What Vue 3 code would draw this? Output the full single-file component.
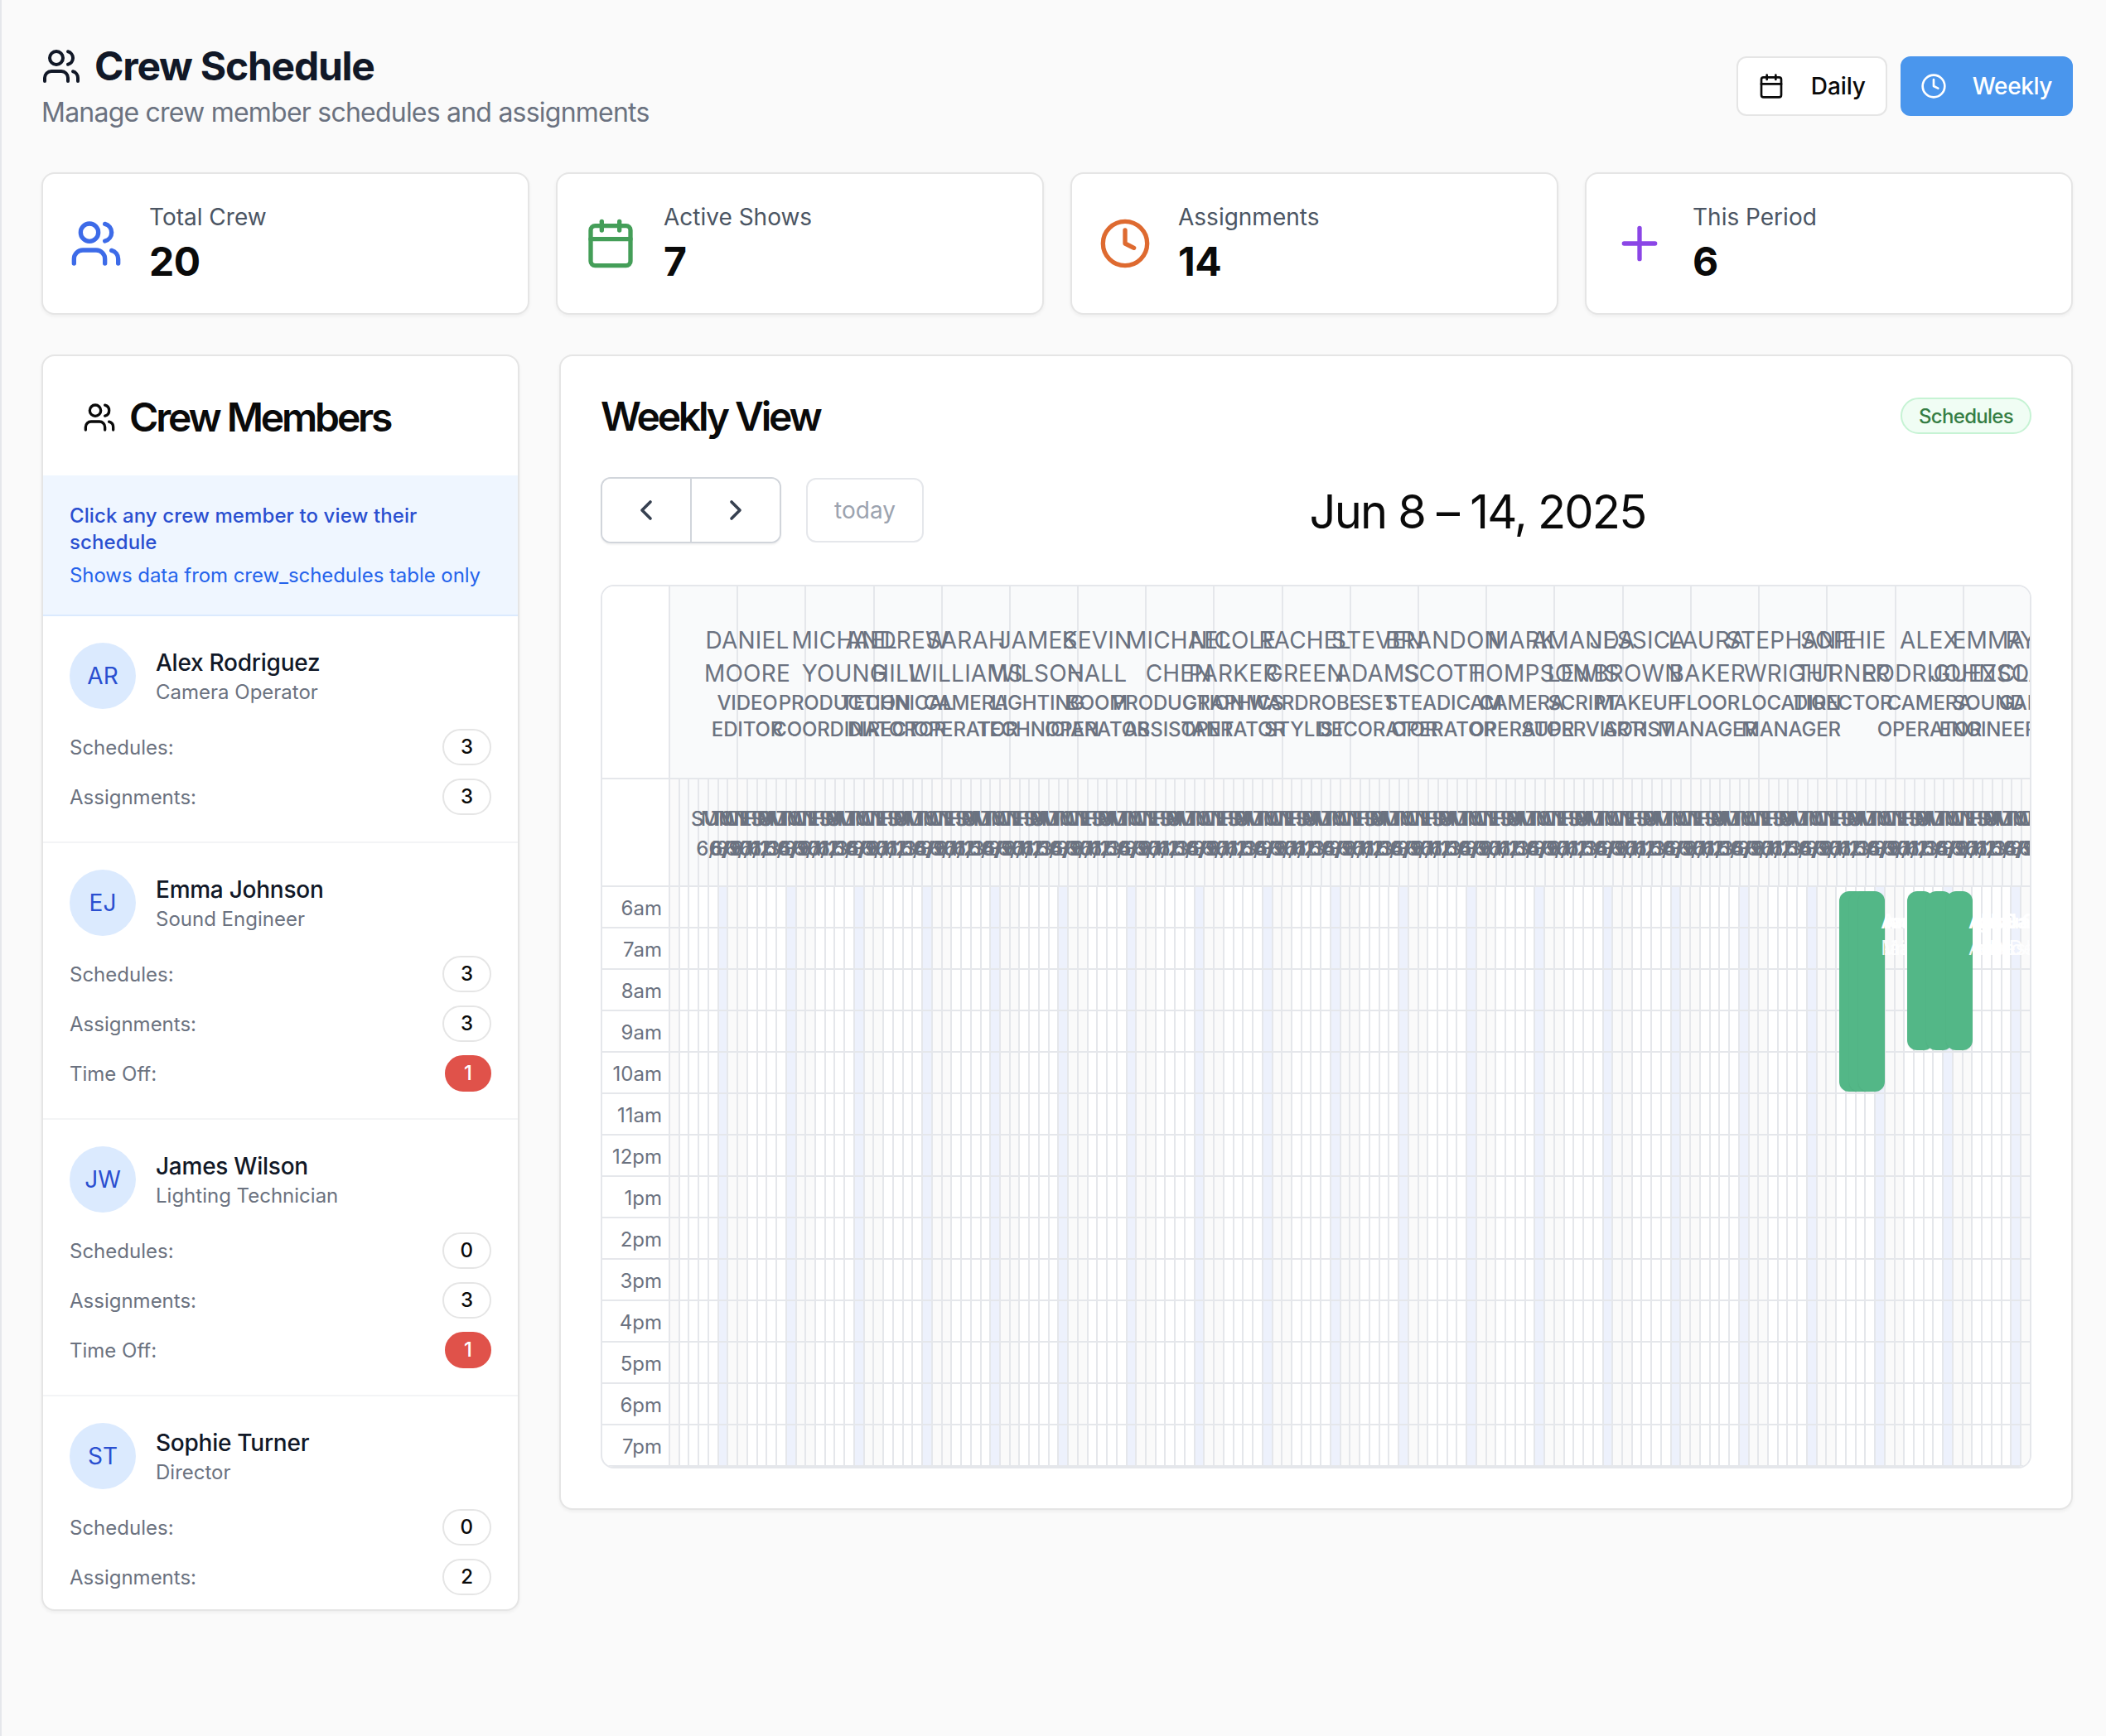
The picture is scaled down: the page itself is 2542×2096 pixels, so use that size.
<script setup>
const stats = [
  { label: 'Total Crew', value: '20', icon: 'users', color: 'blue' },
  { label: 'Active Shows', value: '7', icon: 'calendar', color: 'green' },
  { label: 'Assignments', value: '14', icon: 'clock', color: 'orange' },
  { label: 'This Period', value: '6', icon: 'plus', color: 'purple' },
]
const members = [
  { initials: 'AR', name: 'Alex Rodriguez', role: 'Camera Operator', schedules: 3, assignments: 3, off: 0 },
  { initials: 'EJ', name: 'Emma Johnson', role: 'Sound Engineer', schedules: 3, assignments: 3, off: 1 },
  { initials: 'JW', name: 'James Wilson', role: 'Lighting Technician', schedules: 0, assignments: 3, off: 1 },
  { initials: 'ST', name: 'Sophie Turner', role: 'Director', schedules: 0, assignments: 2, off: 0 },
]
const resources = [
  ['Daniel Moore', 'Video Editor'],
  ['Michael Young', 'Production Coordinator'],
  ['Andrew Hill', 'Technical Director'],
  ['Sarah Williams', 'Camera Operator'],
  ['James Wilson', 'Lighting Technician'],
  ['Kevin Hall', 'Boom Operator'],
  ['Michael Chen', 'Production Assistant'],
  ['Nicole Parker', 'Graphics Operator'],
  ['Rachel Green', 'Wardrobe Stylist'],
  ['Steven Adams', 'Set Decorator'],
  ['Brandon Scott', 'Steadicam Operator'],
  ['Mark Thompson', 'Camera Operator'],
  ['Amanda Lewis', 'Script Supervisor'],
  ['Jessica Brown', 'Makeup Artist'],
  ['Laura Baker', 'Floor Manager'],
  ['Stephanie Wright', 'Location Manager'],
  ['Sophie Turner', 'Director'],
  ['Alex Rodriguez', 'Camera Operator'],
  ['Emma Johnson', 'Sound Engineer'],
  ['Ryan Clark', 'Gaffer'],
]
const week = ['Sun 6/8', 'Mon 6/9', 'Tue 6/10', 'Wed 6/11', 'Thu 6/12', 'Fri 6/13', 'Sat 6/14']
const kinds = ['weekend', 'plain', 'plain', 'plain', 'plain', 'today', 'weekend']
const days = resources.flatMap((_, r) =>
  week.map((label, d) => ({ id: r * 7 + d, label, kind: kinds[d] }))
)
const hours = ['6am', '7am', '8am', '9am', '10am', '11am', '12pm', '1pm', '2pm', '3pm', '4pm', '5pm', '6pm', '7pm']
const COL = 82.15
const DAY = COL / 7
const eventsList = [
  { col: 17, day: 1, h: 242, a: 'Awards Night', b: 'Main Stage' },
  { col: 17, day: 2, h: 242, a: 'Awards Night', b: 'Main Stage' },
  { col: 17, day: 3, h: 242, a: 'Awards Night', b: 'Main Stage' },
  { col: 18, day: 1, h: 192, a: 'Annual Gala Show', b: 'Audio Desk Cover' },
  { col: 18, day: 3, h: 192, a: 'Annual Gala Show', b: 'Audio Desk Cover' },
  { col: 18, day: 5, h: 192, a: 'Annual Gala Show', b: 'Audio Desk Cover' },
].map((e, i) => ({
  ...e,
  id: i,
  style: { left: `${e.col * COL + e.day * DAY + 4.5}px`, height: `${e.h}px` },
}))
</script>

<template>
  <div class="page">
    <header class="top">
      <div>
        <h1 class="title">
          <svg class="i48" viewBox="0 0 24 24"><path d="M16 21v-2a4 4 0 0 0-4-4H6a4 4 0 0 0-4 4v2" /><circle cx="9" cy="7" r="4" /><path d="M22 21v-2a4 4 0 0 0-3-3.87" /><path d="M16 3.13a4 4 0 0 1 0 7.75" /></svg>
          Crew Schedule
        </h1>
        <p class="subtitle">Manage crew member schedules and assignments</p>
      </div>
      <div class="views">
        <button class="view">
          <svg class="i32" viewBox="0 0 24 24"><path d="M8 2v4" /><path d="M16 2v4" /><rect x="3" y="4" width="18" height="18" rx="2" /><path d="M3 10h18" /></svg>
          Daily
        </button>
        <button class="view active">
          <svg class="i32" viewBox="0 0 24 24"><circle cx="12" cy="12" r="10" /><path d="M12 6v6l4 2" /></svg>
          Weekly
        </button>
      </div>
    </header>

    <section class="stats">
      <div v-for="s in stats" :key="s.label" class="card stat">
        <svg class="i64" :class="s.color" viewBox="0 0 24 24">
          <template v-if="s.icon === 'users'"><path d="M16 21v-2a4 4 0 0 0-4-4H6a4 4 0 0 0-4 4v2" /><circle cx="9" cy="7" r="4" /><path d="M22 21v-2a4 4 0 0 0-3-3.87" /><path d="M16 3.13a4 4 0 0 1 0 7.75" /></template>
          <template v-else-if="s.icon === 'calendar'"><path d="M8 2v4" /><path d="M16 2v4" /><rect x="3" y="4" width="18" height="18" rx="2" /><path d="M3 10h18" /></template>
          <template v-else-if="s.icon === 'clock'"><circle cx="12" cy="12" r="10" /><path d="M12 6v6l4 2" /></template>
          <template v-else><path d="M5 12h14" /><path d="M12 5v14" /></template>
        </svg>
        <div>
          <div class="stat-label">{{ s.label }}</div>
          <div class="stat-value">{{ s.value }}</div>
        </div>
      </div>
    </section>

    <section class="columns">
      <aside class="card crew">
        <h2 class="panel-title crew-title">
          <svg class="i40" viewBox="0 0 24 24"><path d="M16 21v-2a4 4 0 0 0-4-4H6a4 4 0 0 0-4 4v2" /><circle cx="9" cy="7" r="4" /><path d="M22 21v-2a4 4 0 0 0-3-3.87" /><path d="M16 3.13a4 4 0 0 1 0 7.75" /></svg>
          Crew Members
        </h2>
        <div class="hint">
          <p class="hint-main">Click any crew member to view their schedule</p>
          <p class="hint-sub">Shows data from crew_schedules table only</p>
        </div>
        <div class="list">
          <article v-for="m in members" :key="m.name" class="member">
            <div class="who">
              <div class="avatar">{{ m.initials }}</div>
              <div>
                <div class="name">{{ m.name }}</div>
                <div class="role">{{ m.role }}</div>
              </div>
            </div>
            <div class="rows">
              <div class="row"><span>Schedules:</span><b class="pill">{{ m.schedules }}</b></div>
              <div class="row"><span>Assignments:</span><b class="pill">{{ m.assignments }}</b></div>
              <div v-if="m.off" class="row"><span>Time Off:</span><b class="pill red">{{ m.off }}</b></div>
            </div>
          </article>
        </div>
      </aside>

      <main class="card week">
        <div class="week-head">
          <h2 class="panel-title week-title">Weekly View</h2>
          <span class="tag">Schedules</span>
        </div>
        <div class="toolbar">
          <div class="tools">
            <div class="nav">
              <button class="nav-btn"><svg class="i40 chev" viewBox="0 0 24 24"><path d="m15 18-6-6 6-6" /></svg></button>
              <button class="nav-btn"><svg class="i40 chev" viewBox="0 0 24 24"><path d="m9 18 6-6-6-6" /></svg></button>
            </div>
            <button class="today-btn">today</button>
          </div>
          <div class="range">Jun 8 – 14, 2025</div>
          <div></div>
        </div>

        <div class="calendar">
          <table class="head">
            <colgroup>
              <col class="col-time" />
              <col v-for="d in days" :key="d.id" class="col-day" />
            </colgroup>
            <thead>
              <tr>
                <td class="corner res-h"></td>
                <td v-for="r in resources" :key="r[0]" colspan="7" class="res-cell res-h">
                  <div class="res-inner">
                    <span class="res-name">{{ r[0] }}</span>
                    <span class="res-role">{{ r[1] }}</span>
                  </div>
                </td>
              </tr>
              <tr>
                <td class="corner day-h"></td>
                <td v-for="d in days" :key="d.id" class="day-cell day-h" :class="d.kind">
                  <div class="day-inner">{{ d.label }}</div>
                </td>
              </tr>
            </thead>
          </table>
          <div class="body">
            <div class="times">
              <div v-for="h in hours" :key="h" class="time">{{ h }}</div>
            </div>
            <div class="grid">
              <div v-for="d in days" :key="d.id" class="slot" :class="d.kind"></div>
              <div class="events">
                <div v-for="e in eventsList" :key="e.id" class="event" :style="e.style">
                  <div class="event-text">
                    <div class="event-a">{{ e.a }}</div>
                    <div class="event-b">{{ e.b }}</div>
                  </div>
                </div>
              </div>
            </div>
          </div>
        </div>
      </main>
    </section>
  </div>
</template>

<style>
html, body { margin: 0; background: #fafafa; }
</style>

<style scoped>
* { box-sizing: border-box; }
.page {
  min-height: 2096px;
  padding: 48px 40px 48px 48px;
  background: #fafafa;
  border-left: 2px solid #e5e7eb;
  font-family: Inter, "Liberation Sans", sans-serif;
  color: #0a0a0a;
}
svg { fill: none; stroke: currentColor; stroke-width: 2; stroke-linecap: round; stroke-linejoin: round; flex: none; }
.i32 { width: 32px; height: 32px; }
.i40 { width: 40px; height: 40px; }
.i48 { width: 48px; height: 48px; }
.i64 { width: 64px; height: 64px; }
.blue { color: #3d6be8; }
.green { color: #449e58; }
.orange { color: #de6a30; }
.purple { color: #8b46e6; }

.top { display: flex; justify-content: space-between; align-items: center; height: 112px; margin-bottom: 48px; }
.title { display: flex; align-items: center; gap: 16px; margin: 0; font-size: 48px; line-height: 64px; font-weight: 700; color: #111827; letter-spacing: -1.25px; }
.subtitle { margin: 0; font-size: 32px; line-height: 48px; color: #6b7280; letter-spacing: -0.78px; }
.views { display: flex; gap: 16px; }
.view { display: flex; align-items: center; gap: 32px; height: 72px; padding: 0 24px; background: #fff; border: 2px solid #e5e5e5; border-radius: 12px; font: 500 28px/40px Inter, sans-serif; color: #0a0a0a; letter-spacing: -0.1px; }
.view.active { gap: 31px; padding: 0 23px 0 22px; background: #4a96ed; border-color: #4a96ed; color: #fff; letter-spacing: -0.4px; }

.card { background: #fff; border: 2px solid #e5e5e5; border-radius: 16px; box-shadow: 0 2px 4px rgba(0, 0, 0, 0.05); }
.stats { display: grid; grid-template-columns: repeat(4, 1fr); gap: 32px; margin-bottom: 48px; }
.stat { display: flex; align-items: center; gap: 32px; padding: 32px; }
.stat-label { font-size: 28px; line-height: 40px; color: #4b5563; }
.stat-value { position: relative; top: 2px; font-size: 48px; line-height: 64px; font-weight: 700; color: #0a0a0a; letter-spacing: -0.4px; }

.columns { display: grid; grid-template-columns: 577px minmax(0, 1fr); gap: 48px; align-items: start; }
.crew { overflow: hidden; }
.panel-title { margin: 0; font-size: 48px; line-height: 48px; font-weight: 600; letter-spacing: -3.15px; color: #0a0a0a; }
.crew-title { display: flex; align-items: center; gap: 16px; padding: 50px 48px 46px; }
.week-title { line-height: 50px; height: 48px; }
.hint { padding: 33px 32px 31px; background: #eff6ff; border-bottom: 2px solid #dbeafe; }
.hint p { margin: 0; font-size: 24px; line-height: 32px; }
.hint-main { font-weight: 500; color: #2a4fd0; letter-spacing: 0.1px; }
.hint-sub { margin-top: 8px !important; color: #2563eb; letter-spacing: -0.06px; }
.list { max-height: 1199px; overflow: hidden; }
.member { padding: 32px; border-bottom: 2px solid #f3f4f6; }
.who { display: flex; align-items: center; gap: 24px; margin-bottom: 24px; }
.avatar { display: flex; align-items: center; justify-content: center; width: 80px; height: 80px; border-radius: 50%; background: #dbeafe; color: #2a4fd0; font-size: 28px; font-weight: 400; }
.name { font-size: 28px; line-height: 40px; font-weight: 500; color: #111827; letter-spacing: -0.25px; }
.role { font-size: 24px; line-height: 32px; color: #6b7280; }
.rows { display: flex; flex-direction: column; gap: 16px; }
.row { display: flex; justify-content: space-between; align-items: center; font-size: 24px; color: #6b7280; }
.pill { display: inline-flex; align-items: center; height: 44px; padding: 0 20px; border: 2px solid #e5e5e5; border-radius: 999px; background: #fff; font-weight: 500; line-height: 32px; color: #0a0a0a; }
.pill.red { padding: 0 21px; background: #e0524a; border-color: #e0524a; color: #fff; }

.week { padding: 48px; }
.week-head { display: flex; justify-content: space-between; align-items: center; margin-bottom: 50px; }
.tag { display: inline-flex; align-items: center; height: 44px; padding: 0 20px; border: 2px solid #c6f3d4; border-radius: 999px; background: #f0fdf4; color: #367e45; font-size: 24px; font-weight: 500; letter-spacing: -0.7px; }
.toolbar { display: flex; justify-content: space-between; align-items: center; height: 80px; margin-bottom: 50px; }
.tools { display: flex; align-items: center; gap: 30px; }
.nav { display: flex; width: 218px; height: 80px; background: #fff; border: 2px solid #d1d5db; border-radius: 12px; box-shadow: 0 2px 2px rgba(0, 0, 0, 0.05); overflow: hidden; }
.nav-btn { flex: 1; display: flex; align-items: center; justify-content: center; padding: 0; background: #fff; border: 0; }
.nav-btn + .nav-btn { border-left: 2px solid #d1d5db; }
.chev { color: #374151; stroke-width: 2.2; }
.today-btn { width: 142px; height: 78px; background: #fff; border: 2px solid #e5e7eb; border-radius: 12px; font: 400 28px/40px Inter, sans-serif; color: #9ca3af; }
.range { padding-top: 3px; font-size: 56px; line-height: 64px; font-weight: 400; color: #0a0a0a; letter-spacing: -1.8px; }

.calendar { border: 2px solid #e5e7eb; border-radius: 16px; overflow: hidden; background: #fff; }
.head { width: 1723px; table-layout: fixed; border-collapse: separate; border-spacing: 0; }
.col-time { width: 80px; }
.col-day { width: 11.7357px; }
.head td { padding: 0; border-bottom: 2px solid #e5e7eb; }
.corner { background: #fff; }
.res-h { height: 233px; }
.day-h { height: 130px; }
.head td.res-cell { padding: 45px 0 0 41px; vertical-align: top; border-left: 2px solid #e5e7eb; background: #f9fafb; color: #6b7280; text-transform: uppercase; }
.res-inner { width: min-content; text-align: center; }
.res-name { display: block; font-size: 28px; line-height: 40px; letter-spacing: 0.2px; }
.res-role { display: block; font-size: 24px; line-height: 32px; font-weight: 500; letter-spacing: -0.15px; }
.head td.day-cell { padding: 3px 0 0 25px; vertical-align: middle; border-left: 2px solid #e5e7eb; background: #f9fafb; color: #6b7280; font-size: 24px; line-height: 36px; font-weight: 500; text-transform: uppercase; }
.head td.day-cell.weekend { background: #fafafa; }
.day-inner { width: min-content; text-align: center; }
.body { display: flex; height: 700px; }
.times { flex: 0 0 80px; }
.time { height: 50px; padding: 1px 8px 0 0; border-bottom: 2px solid #e5e7eb; font-size: 24px; line-height: 50px; text-align: right; color: #6b7280; }
.grid { position: relative; flex: 1; display: flex; min-width: 0; }
.slot { flex: 0 0 11.7357px; height: 700px; border-left: 2px solid #e5e7eb; background-color: #fff; background-image: linear-gradient(to top, #e5e7eb 2px, transparent 2px); background-size: 100% 50px; }
.slot.weekend { background-color: #fafafa; }
.slot.today { background-color: #edf1fc; }
.events { position: absolute; inset: 0; }
.event { position: absolute; top: 5px; width: 32px; border-radius: 12px; background: #53b787; box-shadow: 0 1px 2px rgba(0, 0, 0, 0.05); }
.event-text { padding: 21px 0 0 27px; color: #fff; font-size: 24px; line-height: 32px; white-space: nowrap; }
.event-a { font-weight: 600; }
.event-b { opacity: 0.9; }
</style>
